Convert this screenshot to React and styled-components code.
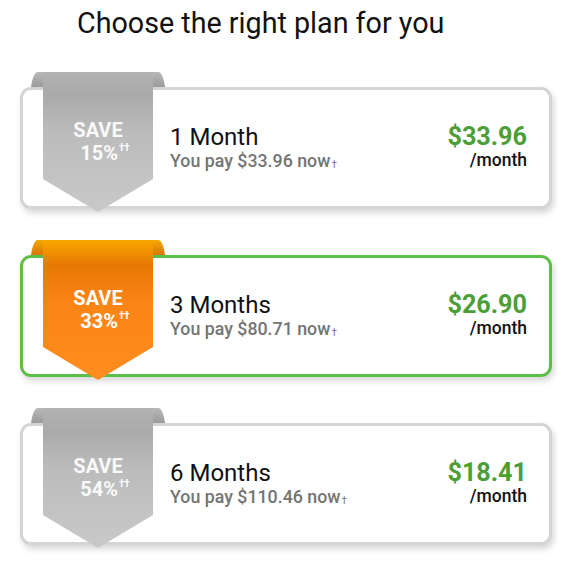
import React from "react";
import styled, { createGlobalStyle } from "styled-components";

const Global = createGlobalStyle`
  html, body { margin: 0; padding: 0; background: #ffffff; }
  body { font-family: Roboto, "Noto Sans", "Liberation Sans", sans-serif; color: #111; }
`;

const Page = styled.div`
  width: 580px;
  height: 570px;
  overflow: hidden;
  box-sizing: border-box;
  padding-top: 7px;
`;

const Title = styled.h1`
  margin: 0 0 32px 77px;
  font-size: 28.7px;
  font-weight: 400;
  line-height: 33px;
  color: #111;
`;

const PlanList = styled.div`
  display: flex;
  flex-direction: column;
  gap: 31px;
  padding-left: 20px;
`;

const PlanItem = styled.div`
  position: relative;
  width: 532px;
  padding-top: 15px;
`;

const Card = styled.div`
  box-sizing: border-box;
  height: 122px;
  border: 3px solid ${(p) => (p.$selected ? "#5cbf47" : "#d4d4d4")};
  border-radius: 11px;
  background: #fff;
  box-shadow: 2px 4px 6px rgba(0, 0, 0, 0.16);
  display: flex;
  align-items: center;
  justify-content: space-between;
  padding: 0 22px 0 147px;
`;

const Info = styled.div`
  display: flex;
  flex-direction: column;
  margin-top: 2px;
`;

const Name = styled.div`
  font-size: 24px;
  line-height: 26px;
  font-weight: 400;
  color: #111;
`;

const Sub = styled.div`
  font-size: 17.8px;
  line-height: 21px;
  font-weight: 500;
  color: #747474;
`;

const Dagger = styled.span`
  font-size: 10px;
  font-weight: 400;
  vertical-align: -1px;
  margin-left: 1px;
`;

const PriceBox = styled.div`
  display: flex;
  flex-direction: column;
  align-items: flex-end;
  margin-bottom: 2px;
`;

const Price = styled.div`
  font-size: 25.2px;
  line-height: 27px;
  font-weight: 700;
  color: #4c9e37;
`;

const Per = styled.div`
  font-size: 17.5px;
  line-height: 21px;
  font-weight: 500;
  color: #111;
`;

const Ribbon = styled.div`
  position: absolute;
  left: 11px;
  top: 0;
  width: 134px;
  height: 140px;
`;

const RibbonArt = styled.svg`
  position: absolute;
  left: 0;
  top: 0;
  width: 134px;
  height: 140px;
  overflow: visible;
`;

const RibbonText = styled.div`
  position: absolute;
  left: 12px;
  top: 47px;
  width: 110px;
  display: flex;
  flex-direction: column;
  align-items: center;
  color: #fff;
  font-weight: 700;
  font-size: 20px;
  line-height: 23px;
  opacity: ${(p) => (p.$muted ? 0.93 : 1)};
`;

const Pct = styled.span`
  padding-left: 14px;
`;

const Sup = styled.sup`
  font-size: 10px;
  vertical-align: 9px;
  line-height: 0;
  margin-left: 1px;
`;

const palettes = {
  gray: {
    body: [
      ["0%", "#b3b3b3"],
      ["16%", "#aaaaaa"],
      ["42%", "#bbbbbb"],
      ["100%", "#c9c9c9"],
    ],
    flapTop: "#b8b8b8",
    flapBottom: "#9c9c9c",
  },
  orange: {
    body: [
      ["0%", "#f7a600"],
      ["18%", "#e87805"],
      ["44%", "#fa8414"],
      ["100%", "#ff8d1f"],
    ],
    flapTop: "#f4a800",
    flapBottom: "#d8760a",
  },
};

function RibbonBadge({ id, tone, pct }) {
  const pal = palettes[tone];
  return (
    <Ribbon>
      <RibbonArt viewBox="0 0 134 140">
        <defs>
          <linearGradient id={`b-${id}`} x1="0" y1="0" x2="0" y2="1">
            {pal.body.map(([o, c]) => (
              <stop key={o} offset={o} stopColor={c} />
            ))}
          </linearGradient>
          <linearGradient id={`f-${id}`} x1="0" y1="0" x2="0" y2="1">
            <stop offset="0%" stopColor={pal.flapTop} />
            <stop offset="100%" stopColor={pal.flapBottom} />
          </linearGradient>
        </defs>
        <path d="M12 0 H7 C3 0 1 8 0 15 H12 Z" fill={`url(#f-${id})`} />
        <path d="M122 0 H127 C131 0 133 8 134 15 H122 Z" fill={`url(#f-${id})`} />
        <path d="M12 0 H122 V107 L67 140 L12 107 Z" fill={`url(#b-${id})`} />
      </RibbonArt>
      <RibbonText $muted={tone === "gray"}>
        <span>SAVE</span>
        <Pct>
          {pct}
          <Sup>††</Sup>
        </Pct>
      </RibbonText>
    </Ribbon>
  );
}

const plans = [
  { id: "p1", name: "1 Month", total: "$33.96", price: "$33.96", save: "15%", tone: "gray" },
  { id: "p3", name: "3 Months", total: "$80.71", price: "$26.90", save: "33%", tone: "orange", selected: true },
  { id: "p6", name: "6 Months", total: "$110.46", price: "$18.41", save: "54%", tone: "gray" },
];

export default function App() {
  return (
    <Page>
      <Global />
      <Title>Choose the right plan for you</Title>
      <PlanList>
        {plans.map((p) => (
          <PlanItem key={p.id}>
            <Card $selected={p.selected}>
              <Info>
                <Name>{p.name}</Name>
                <Sub>
                  You pay {p.total} now<Dagger>†</Dagger>
                </Sub>
              </Info>
              <PriceBox>
                <Price>{p.price}</Price>
                <Per>/month</Per>
              </PriceBox>
            </Card>
            <RibbonBadge id={p.id} tone={p.tone} pct={p.save} />
          </PlanItem>
        ))}
      </PlanList>
    </Page>
  );
}
